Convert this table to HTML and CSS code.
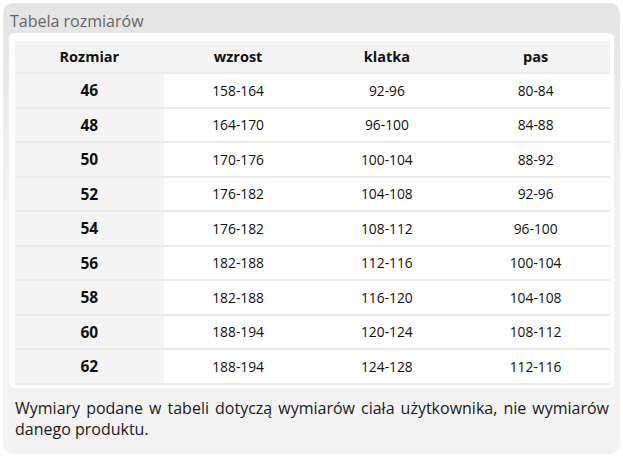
FILE: index.html
```html
<!DOCTYPE html>
<html lang="pl">
<head>
<meta charset="utf-8">
<link rel="stylesheet" href="styles.css">
</head>
<body>
<div class="box">
  <div class="title">Tabela rozmiarów</div>
  <div class="card">
    <table class="sizes">
      <thead>
        <tr><th>Rozmiar</th><th>wzrost</th><th>klatka</th><th>pas</th></tr>
      </thead>
      <tbody>
        <tr><td>46</td><td>158-164</td><td>92-96</td><td>80-84</td></tr>
        <tr><td>48</td><td>164-170</td><td>96-100</td><td>84-88</td></tr>
        <tr><td>50</td><td>170-176</td><td>100-104</td><td>88-92</td></tr>
        <tr><td>52</td><td>176-182</td><td>104-108</td><td>92-96</td></tr>
        <tr><td>54</td><td>176-182</td><td>108-112</td><td>96-100</td></tr>
        <tr><td>56</td><td>182-188</td><td>112-116</td><td>100-104</td></tr>
        <tr><td>58</td><td>182-188</td><td>116-120</td><td>104-108</td></tr>
        <tr><td>60</td><td>188-194</td><td>120-124</td><td>108-112</td></tr>
        <tr><td>62</td><td>188-194</td><td>124-128</td><td>112-116</td></tr>
      </tbody>
    </table>
  </div>
  <p class="note">Wymiary podane w tabeli dotyczą wymiarów ciała użytkownika, nie wymiarów danego produktu.</p>
</div>
</body>
</html>
```
FILE: styles.css
```css
html, body {
  margin: 0;
  padding: 0;
  background: #fff;
}
body {
  padding: 3px;
  font-family: "Open Sans", "Liberation Sans", sans-serif;
}
.box {
  width: 617px;
  height: 451px;
  box-sizing: border-box;
  border-radius: 10px;
  background: linear-gradient(to bottom, #e4e4e4 0px, #e6e6e6 30px, #f3f3f3 200px, #f3f3f3 100%);
  padding: 0 6px;
}
.title {
  font-size: 16px;
  color: #666;
  line-height: 22px;
  padding: 7px 0 0 1px;
  height: 23px;
}
.card {
  background: #fff;
  border-radius: 6px;
  padding: 8px 4px 3px 6px;
}
.sizes {
  width: 595px;
  border-collapse: collapse;
  table-layout: fixed;
}
.sizes th, .sizes td {
  text-align: center;
  color: #111;
  padding: 0;
  border-bottom: 2px solid #ececec;
}
.sizes th {
  background: #f4f4f4;
  font-size: 14.5px;
  font-weight: 700;
  height: 31px;
  border-bottom-color: #ededed;
}
.sizes td {
  font-size: 13.8px;
  height: 32.5px;
}
.sizes td:first-child {
  background: #f4f4f4;
  font-weight: 700;
  font-size: 15.5px;
}
.note {
  margin: 0;
  padding: 10px 5px 0 6px;
  font-size: 16px;
  line-height: 21px;
  color: #1a1a1a;
  text-align: justify;
}
```
